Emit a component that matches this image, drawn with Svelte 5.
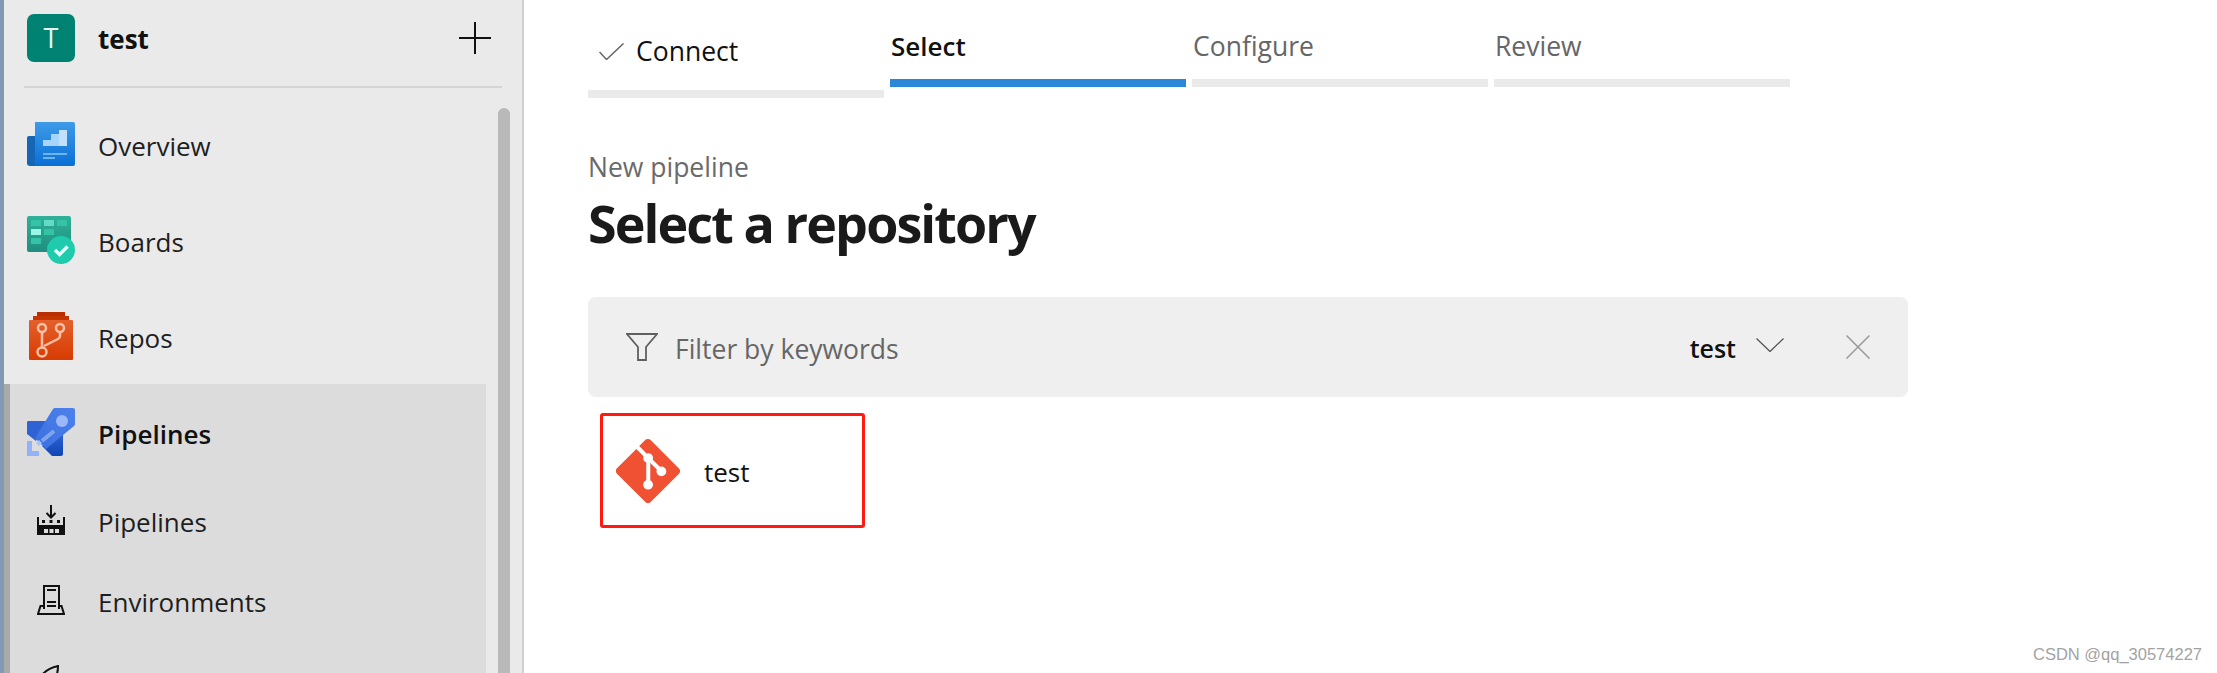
<script>
  const steps = [
    { label: 'Connect', state: 'done' },
    { label: 'Select', state: 'active' },
    { label: 'Configure', state: 'todo' },
    { label: 'Review', state: 'todo' }
  ];
</script>

<div class="page">
  <div class="edge"></div>
  <aside class="sidebar">
    <header class="project">
      <div class="avatar">T</div>
      <span class="project-name">test</span>
      <svg class="plus" width="32" height="32" viewBox="0 0 32 32">
        <path d="M0 16h32M16 0v32" stroke="#111" stroke-width="2" fill="none" />
      </svg>
    </header>
    <div class="divider"></div>

    <nav class="nav">
      <div class="row">
        <svg class="icon" width="48" height="44" viewBox="0 0 48 44">
          <defs>
            <linearGradient id="ov" x1="0" y1="0" x2="0" y2="1">
              <stop offset="0" stop-color="#3f9be8" />
              <stop offset="1" stop-color="#0a6fd6" />
            </linearGradient>
          </defs>
          <path d="M0 16q0-2 2-2h8v30H3q-3 0-3-3z" fill="#1566b4" />
          <path d="M8 0h38q2 0 2 2v40q0 2-2 2H8z" fill="url(#ov)" />
          <path d="M16 18h8v-6h8V8h8v16H16z" fill="#a9d4fb" />
          <path d="M32 8h8v16h-8z" fill="#c2e1fd" />
          <path d="M16 31h24v2H16zM16 35h12v2H16z" fill="#6db5f1" />
        </svg>
        <span>Overview</span>
      </div>

      <div class="row">
        <svg class="icon" width="48" height="48" viewBox="0 0 48 48">
          <defs>
            <linearGradient id="bd" x1="0" y1="0" x2="0" y2="1">
              <stop offset="0" stop-color="#2fb199" />
              <stop offset="1" stop-color="#1f8e7e" />
            </linearGradient>
          </defs>
          <rect width="44" height="36" rx="2" fill="url(#bd)" />
          <path d="M4 4h10v6H4zM30 4h10v6H30zM17 13h10v6H17zM4 22h10v6H4z" fill="#35c3a8" />
          <path d="M17 4h10v6H17z" fill="#62dcc6" />
          <path d="M4 13h10v6H4z" fill="#97f7e4" />
          <circle cx="34" cy="34" r="14" fill="#1ecbad" />
          <path d="M28 34l4.500 4.500 8-8" stroke="#e9fffa" stroke-width="3.500" fill="none" />
        </svg>
        <span>Boards</span>
      </div>

      <div class="row">
        <svg class="icon repos" width="44" height="48" viewBox="0 0 44 48">
          <defs>
            <linearGradient id="rp" x1="0" y1="0" x2="0" y2="1">
              <stop offset="0" stop-color="#e4602c" />
              <stop offset="1" stop-color="#d83b01" />
            </linearGradient>
          </defs>
          <path d="M8 0h28v4H8z" fill="#b82e00" />
          <path d="M4 4h36v4H4z" fill="#c43501" />
          <rect y="8" width="44" height="40" rx="1" fill="url(#rp)" />
          <g stroke="#fcc0a6" stroke-width="2.500" fill="none">
            <circle cx="13" cy="16" r="4" />
            <circle cx="31" cy="16" r="4" />
            <circle cx="13" cy="40" r="4.500" />
            <path d="M13 20v16M31 20v4q0 2-2 3l-14 7" />
          </g>
        </svg>
        <span>Repos</span>
      </div>

      <div class="group">
        <div class="row">
          <svg class="icon" width="48" height="48" viewBox="0 0 48 48">
            <defs>
              <linearGradient id="pl" x1="1" y1="0" x2="0" y2="1">
                <stop offset="0" stop-color="#4d82ec" />
                <stop offset="1" stop-color="#3a6fdf" />
              </linearGradient>
              <linearGradient id="pw" x1="0" y1="0" x2="0" y2="1">
                <stop offset="0" stop-color="#2f62d2" />
                <stop offset="1" stop-color="#0f45b6" />
              </linearGradient>
            </defs>
            <path d="M1 13h18L9 33 0 26V14z" fill="#2f62d2" />
            <path d="M36 26v20q0 2-2 2h-9l-10-10z" fill="url(#pw)" />
            <path d="M26 1q1-1 2-1h18q2 0 2 2v14q0 1-1 2L19 41 8 30z" fill="url(#pl)" />
            <circle cx="35" cy="13" r="6" fill="#9bb8f8" />
            <path d="M15 33L27 23" stroke="#7fa3ee" stroke-width="4" fill="none" />
            <path d="M9 35l3-3 3 3-3 3z" fill="#a9c1f9" />
            <path d="M0 33h5v10h7v5H0z" fill="#91b1fb" />
          </svg>
          <span class="strong">Pipelines</span>
        </div>

        <div class="row sub">
          <svg class="icon small" width="28" height="30" viewBox="0 0 28 30">
            <path d="M14 0v12M9.500 8l4.500 4.500L18.500 8M1 12v18M27 12v18" stroke="#111" stroke-width="2" fill="none" />
            <path d="M0 20h28v10H0z" fill="#111" />
            <path d="M7 24h4v4H7zM12.500 24h4v4h-4zM18 24h4v4h-4z" fill="#dcdcdc" />
            <path d="M5 15h3v3H5zM12.500 15h3v3h-3zM20 15h3v3h-3z" fill="#111" />
          </svg>
          <span>Pipelines</span>
        </div>

        <div class="row sub">
          <svg class="icon small" width="28" height="30" viewBox="0 0 28 30">
            <path d="M7 24V1h15v23" stroke="#111" stroke-width="2" fill="none" />
            <path d="M10 5h9M10 17h9M10 21h9" stroke="#111" stroke-width="2" fill="none" />
            <path d="M7 21H3.500L1 29h26l-2.500-8H22" stroke="#111" stroke-width="2" fill="none" />
          </svg>
          <span>Environments</span>
        </div>

        <div class="row sub">
          <svg class="icon small" width="28" height="30" viewBox="0 0 28 30">
            <path d="M0 18Q6 4 21 1q0 12-9 24" stroke="#111" stroke-width="2" fill="none" />
          </svg>
          <span>Releases</span>
        </div>
      </div>
    </nav>

    <div class="scrollbar"></div>
  </aside>

  <main class="main">
    <div class="steps">
      {#each steps as step}
        <div class="step {step.state}">
          <div class="step-label">
            {#if step.state === 'done'}
              <svg width="25" height="17" viewBox="0 0 25 17">
                <path d="M0.500 9l7 7.500L24.500 0.500" stroke="#666" stroke-width="1.500" fill="none" />
              </svg>
            {/if}
            <span>{step.label}</span>
          </div>
          <div class="step-bar"></div>
        </div>
      {/each}
    </div>

    <p class="crumb">New pipeline</p>
    <h1>Select a repository</h1>

    <div class="filter">
      <svg width="32" height="28" viewBox="0 0 32 28">
        <path d="M1 1h30L20 14v13h-8V14z" stroke="#5f5f5f" stroke-width="1.800" fill="none" />
      </svg>
      <span class="filter-text">Filter by keywords</span>
      <span class="filter-value">test</span>
      <svg class="chevron" width="28" height="14" viewBox="0 0 28 14">
        <path d="M0.500 0.500L14 13.500 27.500 0.500" stroke="#555" stroke-width="1.300" fill="none" />
      </svg>
      <svg class="close" width="24" height="24" viewBox="0 0 24 24">
        <path d="M0.500 0.500l23 23M23.500 0.500l-23 23" stroke="#999" stroke-width="1.500" fill="none" />
      </svg>
    </div>

    <div class="repo">
      <svg width="64" height="64" viewBox="0 0 92 92">
        <path fill="#f05133" d="M90.156 41.965 50.036 1.848a5.918 5.918 0 0 0-8.372 0l-8.328 8.332 10.566 10.566a7.03 7.03 0 0 1 7.23 1.684 7.034 7.034 0 0 1 1.669 7.277l10.187 10.184a7.028 7.028 0 0 1 7.278 1.672 7.04 7.04 0 0 1 0 9.957 7.05 7.05 0 0 1-9.965 0 7.044 7.044 0 0 1-1.528-7.66l-9.5-9.497V59.36a7.04 7.04 0 0 1 1.86 11.29 7.04 7.04 0 0 1-9.957 0 7.04 7.04 0 0 1 0-9.958 7.06 7.06 0 0 1 2.304-1.539V33.926a7.049 7.049 0 0 1-3.82-9.234L29.242 14.272 1.73 41.777a5.925 5.925 0 0 0 0 8.371L41.852 90.27a5.925 5.925 0 0 0 8.37 0l39.934-39.934a5.925 5.925 0 0 0 0-8.371" />
      </svg>
      <span>test</span>
    </div>
  </main>

  <div class="watermark">CSDN @qq_30574227</div>
</div>

<style>
  :global(body) {
    margin: 0;
    background: #fff;
  }

  .page {
    position: relative;
    display: flex;
    height: 673px;
    overflow: hidden;
    font-family: "Open Sans", "Noto Sans", sans-serif;
    color: #1e1e1e;
  }

  .edge {
    width: 4px;
    flex: none;
    background: #7f9ab2;
  }

  /* sidebar */
  .sidebar {
    position: relative;
    width: 518px;
    flex: none;
    background: #eaeaea;
    border-right: 2px solid #d0d0d0;
    font-size: 26px;
  }

  .project {
    display: flex;
    align-items: center;
    height: 76px;
    padding-left: 23px;
  }

  .avatar {
    width: 48px;
    height: 48px;
    border-radius: 7px;
    background: #008272;
    color: #e6f5f2;
    font-size: 27px;
    line-height: 48px;
    text-align: center;
  }

  .project-name {
    margin-left: 23px;
    padding-top: 2px;
    font-weight: 700;
    font-size: 26px;
    color: #111;
  }

  .plus {
    margin-left: auto;
    margin-right: 31px;
  }

  .divider {
    height: 2px;
    margin: 10px 20px 0 20px;
    background: #d4d4d4;
  }

  .nav {
    padding: 8px 36px 0 0;
  }

  .row {
    display: flex;
    align-items: center;
    height: 96px;
    padding-left: 23px;
  }

  .row span {
    padding-top: 3px;
  }

  .icon {
    width: 48px;
    flex: none;
    margin-right: 23px;
  }

  .icon.repos {
    padding: 0 2px;
    width: 44px;
  }

  .icon.small {
    width: 28px;
    padding: 0 10px;
  }

  .group {
    border-left: 6px solid #aaa;
    background: #dcdcdc;
  }

  .group .row {
    padding-left: 17px;
  }

  .strong {
    font-weight: 600;
    color: #111;
  }

  .row.sub {
    height: 80px;
  }

  .scrollbar {
    position: absolute;
    top: 108px;
    left: 494px;
    width: 12px;
    height: 600px;
    border-radius: 6px 6px 0 0;
    background: #b9b9b9;
  }

  /* main */
  .main {
    flex: 1;
    padding-left: 64px;
  }

  .steps {
    display: flex;
    gap: 6px;
    align-items: flex-start;
  }

  .step {
    width: 296px;
  }

  .step-label {
    display: flex;
    align-items: center;
    height: 79px;
    box-sizing: border-box;
    padding: 12px 0 0 1px;
    font-size: 26.500px;
    color: #666;
  }

  .step-bar {
    height: 8px;
    background: #eaeaea;
  }

  .step.active .step-label {
    color: #111;
    font-weight: 600;
    font-size: 26px;
  }

  .step.active .step-bar {
    background: #2b88d8;
  }

  .step.done .step-label {
    height: 90px;
    padding: 12px 0 0 11px;
    color: #111;
    gap: 12px;
  }

  .crumb {
    margin: 51px 0 0 0;
    font-size: 26.500px;
    line-height: 36px;
    color: #6a6a6a;
  }

  h1 {
    margin: 0;
    font-size: 52px;
    line-height: 76px;
    font-weight: 700;
    color: #1a1a1a;
    letter-spacing: -1.900px;
  }

  .filter {
    display: flex;
    align-items: center;
    width: 1320px;
    height: 100px;
    margin-top: 36px;
    padding-left: 38px;
    box-sizing: border-box;
    border-radius: 8px;
    background: #efefef;
  }

  .filter-text {
    margin-left: 17px;
    padding-top: 3px;
    font-size: 26.500px;
    color: #666;
  }

  .filter-value {
    margin-left: auto;
    padding-top: 1px;
    font-size: 25px;
    font-weight: 600;
    color: #111;
  }

  .chevron {
    margin-left: 20px;
    margin-bottom: 4px;
  }

  .close {
    margin: 0 38px 0 62px;
  }

  .repo {
    display: flex;
    align-items: center;
    gap: 24px;
    width: 265px;
    height: 115px;
    margin: 16px 0 0 12px;
    padding-left: 13px;
    box-sizing: border-box;
    border: 3px solid #fe1a10;
    border-radius: 3px;
    font-size: 26px;
    color: #111;
  }

  .repo span {
    padding-top: 3px;
  }

  .watermark {
    position: absolute;
    right: 15px;
    bottom: 9px;
    font-family: "Liberation Sans", Arial, sans-serif;
    font-size: 16.500px;
    color: #a3a3a3;
  }
</style>
